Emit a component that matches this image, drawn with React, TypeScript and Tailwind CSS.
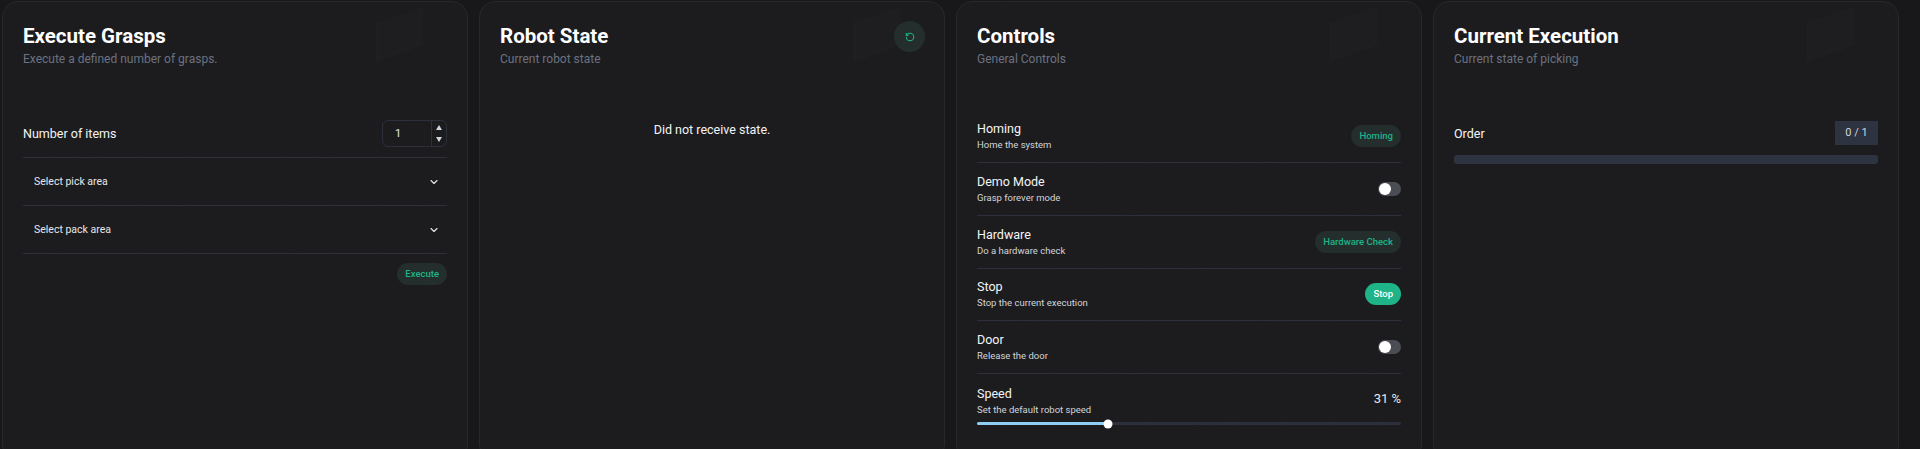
import React from "react";
import { ChevronDown, RotateCcw } from "lucide-react";

function Pattern() {
  const v = [47, 94, 141, 188, 235, 282, 329, 376, 423];
  const d = [-60, 20, 100, 180, 260, 340, 420, 500, 580];
  return (
    <svg className="absolute inset-0 w-full h-full pointer-events-none" preserveAspectRatio="none" viewBox="0 0 466 449" fill="none">
      {v.map((x) => (
        <line key={x} x1={x} y1="0" x2={x} y2="449" stroke="#ffffff" strokeOpacity="0.012" />
      ))}
      {d.map((y) => (
        <line key={y} x1="0" y1={y} x2="466" y2={y - 155} stroke="#ffffff" strokeOpacity="0.012" />
      ))}
      <polygon points="375,21 421,6 421,42 375,58" fill="#ffffff" fillOpacity="0.01" stroke="#ffffff" strokeOpacity="0.018" />
      <polygon points="92,150 139,134 139,190 92,206" fill="#ffffff" fillOpacity="0.005" />
    </svg>
  );
}

function Card({ title, sub, action, children }: { title: string; sub: string; action?: React.ReactNode; children: React.ReactNode }) {
  return (
    <section className="relative flex-1 h-[460px] rounded-2xl border border-[#27272c] bg-[#1c1c1f] px-[20px] pt-[22px] overflow-hidden">
      <Pattern />
      <div className="relative">
        <div className="flex items-start justify-between h-[72px]">
          <div>
            <h2 className="text-[20.5px] leading-[24px] font-bold text-white">{title}</h2>
            <p className="mt-[1px] text-[12px] leading-[20px] text-[#6b7280]">{sub}</p>
          </div>
          {action}
        </div>
        {children}
      </div>
    </section>
  );
}

function Pill({ children, solid }: { children: React.ReactNode; solid?: boolean }) {
  return (
    <button
      className={
        "h-[22px] rounded-full px-[8px] text-[9.5px] leading-[22px] font-medium " +
        (solid ? "bg-[#1eb488] text-white" : "bg-[#242e2c] text-[#1eb488]")
      }
    >
      {children}
    </button>
  );
}

function Toggle() {
  return (
    <div className="h-[14px] w-[23px] rounded-full bg-[#4b4d55] flex items-center pl-[1px]">
      <div className="h-[12px] w-[12px] rounded-full bg-white" />
    </div>
  );
}

function Row({ title, sub, right, border = true }: { title: string; sub: string; right: React.ReactNode; border?: boolean }) {
  return (
    <div className={"flex items-center justify-between h-[52.8px] " + (border ? "border-b border-[#2c303a]" : "")}>
      <div>
        <div className="text-[12.5px] leading-[17px] text-[#f3f4f6]">{title}</div>
        <div className="text-[9.5px] leading-[15px] text-[#d1d5db]">{sub}</div>
      </div>
      {right}
    </div>
  );
}

function SelectRow({ label }: { label: string }) {
  return (
    <div className="h-[48px] border-b border-[#2c303a] flex items-center">
      <div className="flex-1 flex items-center justify-between pl-[11px] pr-[7px] text-[10.5px] text-[#e5e7eb]">
        <span>{label}</span>
        <ChevronDown size={12} strokeWidth={2.2} />
      </div>
    </div>
  );
}

export default function App() {
  return (
    <div className="h-[449px] overflow-hidden bg-[#18181b] pl-[2px] pr-[21px] pt-[1px] flex gap-[11px] font-['Roboto',sans-serif]">
      <Card title="Execute Grasps" sub="Execute a defined number of grasps.">
        <div className="pt-[24px]">
          <div className="h-[38px] border-b border-[#2c303a] flex items-start justify-between">
            <span className="text-[12.5px] leading-[27px] text-[#f3f4f6]">Number of items</span>
            <div className="flex h-[27px] w-[65px] rounded-md border border-[#2c303a]">
              <span className="flex-1 pl-[12px] text-[11px] leading-[25px] text-[#e5e7eb]">1</span>
              <div className="w-[15px] border-l border-[#2c303a] flex flex-col items-center justify-center gap-[7px]">
                <span className="h-0 w-0 border-x-[3px] border-x-transparent border-b-[5px] border-b-[#d1d5db]" />
                <span className="h-0 w-0 border-x-[3px] border-x-transparent border-t-[5px] border-t-[#d1d5db]" />
              </div>
            </div>
          </div>
          <SelectRow label="Select pick area" />
          <SelectRow label="Select pack area" />
          <div className="flex justify-end pt-[9px]">
            <Pill>Execute</Pill>
          </div>
        </div>
      </Card>
      <Card
        title="Robot State"
        sub="Current robot state"
        action={
          <div className="-mt-[3px] mr-[-1px] h-[31px] w-[31px] rounded-full bg-[#242e2c] flex items-center justify-center text-[#1eb488]">
            <RotateCcw size={10} strokeWidth={2.5} />
          </div>
        }
      >
        <p className="pt-[24px] text-center text-[12.5px] leading-[20px] text-[#f3f4f6]">Did not receive state.</p>
      </Card>
      <Card title="Controls" sub="General Controls">
        <div className="pt-[14.2px]">
          <Row title="Homing" sub="Home the system" right={<Pill>Homing</Pill>} />
          <Row title="Demo Mode" sub="Grasp forever mode" right={<Toggle />} />
          <Row title="Hardware" sub="Do a hardware check" right={<Pill>Hardware Check</Pill>} />
          <Row title="Stop" sub="Stop the current execution" right={<Pill solid>Stop</Pill>} />
          <Row title="Door" sub="Release the door" right={<Toggle />} />
          <Row title="Speed" sub="Set the default robot speed" border={false} right={<span className="text-[13px] text-[#e5e7eb] -mt-[3px]">31 %</span>} />
          <div className="relative -mt-[4.5px] h-[3px] rounded-full bg-[#2c303a]">
            <div className="h-full w-[31%] rounded-full bg-[#90cdf4]" />
            <div className="absolute left-[31%] top-1/2 h-[9px] w-[9px] -translate-x-1/2 -translate-y-1/2 rounded-full bg-white" />
          </div>
        </div>
      </Card>
      <Card title="Current Execution" sub="Current state of picking">
        <div className="pt-[25px]">
          <div className="flex items-center justify-between h-[24px]">
            <span className="pt-[2px] text-[12.5px] text-[#f3f4f6]">Order</span>
            <span className="h-[24px] w-[43px] bg-[#2d3340] text-center text-[11px] leading-[24px] text-[#d1d5db]">0 / 1</span>
          </div>
          <div className="mt-[10px] h-[9px] rounded-[3px] bg-[#2d3340]" />
        </div>
      </Card>
    </div>
  );
}
